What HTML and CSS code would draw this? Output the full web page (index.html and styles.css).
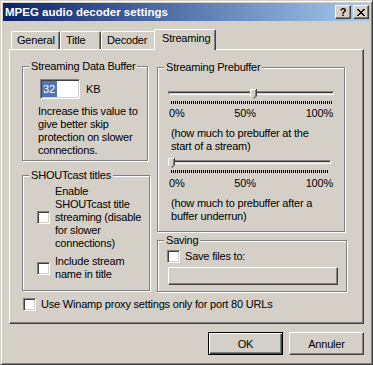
FILE: index.html
```html
<!DOCTYPE html>
<html lang="en">
<head>
    <meta charset="UTF-8">
    <title>MPEG audio decoder settings</title>
    <link rel="stylesheet" href="styles.css">
</head>
<body>
    <div class="dialog">
        <div class="titlebar">
            <span class="title-text">MPEG audio decoder settings</span>
            <div class="caption-buttons">
                <span class="caption-btn help">?</span>
                <span class="caption-btn close">
                    <svg width="8" height="7" viewBox="0 0 8 7" shape-rendering="crispEdges"><path d="M0 0h2v1H0zM6 0h2v1H6zM1 1h2v1H1zM5 1h2v1H5zM2 2h4v1H2zM3 3h2v1H3zM2 4h4v1H2zM1 5h2v1H1zM5 5h2v1H5zM0 6h2v1H0zM6 6h2v1H6z"/></svg>
                </span>
            </div>
        </div>

        <div class="client">
            <div class="tabs">
                <div class="tab tab-general">General</div>
                <div class="tab tab-title">Title</div>
                <div class="tab tab-decoder">Decoder</div>
                <div class="tab tab-streaming active">Streaming</div>
            </div>

            <div class="tab-panel">
                <div class="columns">
                    <div class="col-left">
                        <div class="group group-buffer">
                            <div class="group-title">Streaming Data Buffer</div>
                            <div class="group-body">
                                <div class="buffer-row">
                                    <div class="edit"><span class="selected">32</span></div>
                                    <span class="unit">KB</span>
                                </div>
                                <p class="hint">Increase this value to<br>give better skip<br>protection on slower<br>connections.</p>
                            </div>
                        </div>

                        <div class="group group-shoutcast">
                            <div class="group-title">SHOUTcast titles</div>
                            <div class="group-body">
                                <label class="check check-first">
                                    <span class="box"></span>
                                    <span>Enable<br>SHOUTcast title<br>streaming (disable<br>for slower<br>connections)</span>
                                </label>
                                <label class="check check-second">
                                    <span class="box"></span>
                                    <span>Include stream<br>name in title</span>
                                </label>
                            </div>
                        </div>
                    </div>

                    <div class="col-right">
                        <div class="group group-prebuffer">
                            <div class="group-title">Streaming Prebuffer</div>
                            <div class="group-body">
                                <div class="slider slider-first">
                                    <div class="track"></div>
                                    <svg class="thumb" style="left: 82px" width="7" height="10" viewBox="0 0 7 10">
                                        <path d="M0 0h7v7l-3.5 3L0 7z" fill="#d4d0c8"/>
                                        <polyline points="0.5,7.5 0.5,0.5 6,0.5" fill="none" stroke="#fff"/>
                                        <polyline points="6.5,0 6.5,7.2 3.5,9.8" fill="none" stroke="#404040"/>
                                        <polyline points="5.5,1 5.5,7 3.5,8.8" fill="none" stroke="#808080"/>
                                    </svg>
                                </div>
                                <div class="ticks"></div>
                                <div class="scale"><span>0%</span><span>50%</span><span>100%</span></div>
                                <p class="note">(how much to prebuffer at the<br>start of a stream)</p>

                                <div class="slider slider-second">
                                    <div class="track"></div>
                                    <svg class="thumb" style="left: 0" width="7" height="10" viewBox="0 0 7 10">
                                        <path d="M0 0h7v7l-3.5 3L0 7z" fill="#d4d0c8"/>
                                        <polyline points="0.5,7.5 0.5,0.5 6,0.5" fill="none" stroke="#fff"/>
                                        <polyline points="6.5,0 6.5,7.2 3.5,9.8" fill="none" stroke="#404040"/>
                                        <polyline points="5.5,1 5.5,7 3.5,8.8" fill="none" stroke="#808080"/>
                                    </svg>
                                </div>
                                <div class="ticks ticks-short"></div>
                                <div class="scale scale-second"><span>0%</span><span>50%</span><span>100%</span></div>
                                <p class="note">(how much to prebuffer after a<br>buffer underrun)</p>
                            </div>
                        </div>

                        <div class="group group-saving">
                            <div class="group-title">Saving</div>
                            <div class="group-body">
                                <label class="check check-save">
                                    <span class="box"></span>
                                    <span>Save files to:</span>
                                </label>
                                <div class="path-button"></div>
                            </div>
                        </div>
                    </div>
                </div>

                <label class="check proxy">
                    <span class="box"></span>
                    <span>Use Winamp proxy settings only for port 80 URLs</span>
                </label>
            </div>

            <div class="actions">
                <button class="btn btn-default">OK</button>
                <button class="btn">Annuler</button>
            </div>
        </div>
    </div>
</body>
</html>
```

FILE: styles.css
```css
/* Classic Windows dialog look */
body {
    margin: 0;
    background: #d4d0c8;
    font-family: "Liberation Sans", Arial, sans-serif;
    font-size: 11px;
    letter-spacing: -0.2px;
    color: #000;
}

.dialog {
    width: 373px;
    height: 365px;
    box-sizing: border-box;
    padding: 2px;
    background: #d4d0c8;
    border: 1px solid;
    border-color: #d4d0c8 #404040 #404040 #d4d0c8;
    box-shadow: inset 1px 1px #fff, inset -1px -1px #808080;
}

/* Title bar */
.titlebar {
    height: 18px;
    display: flex;
    align-items: center;
    justify-content: space-between;
    padding: 0 1px 0 2px;
    background: linear-gradient(to right, #0a246a, #a6caf0);
}
.title-text {
    color: #fff;
    font-weight: bold;
    font-size: 11.5px;
    letter-spacing: 0;
}
.caption-buttons {
    display: flex;
    gap: 2px;
}
.caption-btn {
    width: 16px;
    height: 14px;
    box-sizing: border-box;
    display: flex;
    align-items: center;
    justify-content: center;
    background: #d4d0c8;
    border: 1px solid;
    border-color: #fff #404040 #404040 #fff;
    box-shadow: inset -1px -1px #808080;
    font-weight: bold;
    font-size: 11px;
    line-height: 1;
}

/* Client area */
.client {
    padding: 8px 6px 0 6px;
}

/* Tabs */
.tabs {
    display: flex;
    align-items: flex-end;
    height: 20px;
    padding-left: 2px;
    position: relative;
    z-index: 1;
}
.tab {
    box-sizing: border-box;
    height: 18px;
    padding: 2px 0 0 5px;
    line-height: 13px;
    background: #d4d0c8;
    border: 1px solid #fff;
    border-right-color: #404040;
    border-bottom: none;
    border-radius: 2px 2px 0 0;
    box-shadow: inset -1px 0 #808080;
}
.tab-general { width: 49px; }
.tab-title { width: 41px; }
.tab-decoder { width: 55px; }
.tab-streaming { width: 58px; }
.tab.active {
    position: relative;
    z-index: 2;
    width: 62px;
    height: 21px;
    margin: 0 -2px -1px;
    padding-left: 7px;
}

.tab-panel {
    box-sizing: border-box;
    width: 355px;
    padding: 16px 0 12px 12px;
    border: 1px solid;
    border-color: #fff #404040 #404040 #fff;
    box-shadow: inset -1px -1px #808080;
}

.columns {
    display: grid;
    grid-template-columns: 135px 1fr;
    align-items: start;
}

/* Group boxes */
.group {
    box-sizing: border-box;
    border: 1px solid #808080;
    box-shadow: inset 1px 1px #fff, 1px 1px #fff;
}
.group-title {
    display: table;
    margin: -7px 0 0 6px;
    padding: 0 2px;
    line-height: 13px;
    white-space: nowrap;
    background: #d4d0c8;
}

.group-buffer {
    width: 126px;
}
.group-buffer .group-body {
    padding: 0 0 3px 15px;
}
.buffer-row {
    display: flex;
    align-items: center;
    gap: 6px;
    margin: 6px 0 0 2px;
}
.edit {
    width: 40px;
    height: 20px;
    box-sizing: border-box;
    display: flex;
    align-items: center;
    padding-left: 1px;
    background: #fff;
    border: 1px solid;
    border-color: #808080 #fff #fff #808080;
    box-shadow: inset 1px 1px #404040, inset -1px -1px #d4d0c8;
}
.selected {
    height: 16px;
    line-height: 16px;
    padding: 0 2px 0 1px;
    background: #4f74b8;
    color: #fff;
}
.hint {
    margin: 6px 0 0;
    line-height: 13px;
}

.group-shoutcast {
    width: 128px;
    margin-top: 14px;
}
.group-shoutcast .group-body {
    padding: 0 0 9px 14px;
}

/* Checkboxes */
.check {
    display: flex;
    align-items: center;
    gap: 5px;
    line-height: 13px;
    white-space: nowrap;
}
.box {
    flex: none;
    width: 13px;
    height: 13px;
    box-sizing: border-box;
    background: #fff;
    border: 1px solid;
    border-color: #808080 #fff #fff #808080;
    box-shadow: inset 1px 1px #404040, inset -1px -1px #d4d0c8;
}
.check-first { margin-top: 3px; }
.check-second { margin-top: 5px; }

/* Right column */
.group-prebuffer {
    width: 188px;
    margin-top: 1px;
}
.group-prebuffer .group-body {
    padding: 0 0 8px 10px;
}
.slider {
    position: relative;
    width: 166px;
    height: 10px;
}
.slider-first { margin-top: 15px; }
.slider-second {
    width: 163px;
    margin-top: 5px;
}
.track {
    position: absolute;
    top: 2px;
    left: 0;
    right: 0;
    height: 4px;
    box-sizing: border-box;
    border: 1px solid;
    border-color: #808080 #fff #fff #808080;
    box-shadow: inset 0 1px #404040;
}
.thumb {
    position: absolute;
    top: 0;
}
.ticks {
    width: 161px;
    height: 3px;
    margin: 2px 0 0 3px;
    background: repeating-linear-gradient(to right, #000 0 1px, transparent 1px 2px);
}
.ticks-short { width: 158px; }
.scale {
    display: flex;
    justify-content: space-between;
    width: 164px;
    margin-top: 3px;
    padding-left: 1px;
    line-height: 13px;
}
.scale-second { margin-top: 4px; }
.note {
    margin: 7px 0 0 3px;
    line-height: 13px;
}

.group-saving {
    width: 190px;
    margin-top: 8px;
}
.group-saving .group-body {
    padding: 0 0 6px 9px;
}
.check-save { margin-top: 3px; }
.path-button {
    width: 170px;
    height: 18px;
    box-sizing: border-box;
    margin: 4px 0 0 1px;
    border: 1px solid;
    border-color: #fff #404040 #404040 #fff;
    box-shadow: inset -1px -1px #808080;
}

.proxy {
    margin: 6px 0 0 1px;
}

/* Dialog buttons */
.actions {
    display: flex;
    justify-content: flex-end;
    gap: 6px;
    margin-top: 8px;
}
.btn {
    width: 75px;
    height: 23px;
    box-sizing: border-box;
    padding: 0;
    font: inherit;
    letter-spacing: inherit;
    color: #000;
    background: #d4d0c8;
    border: 1px solid;
    border-color: #fff #404040 #404040 #fff;
    box-shadow: inset -1px -1px #808080;
}
.btn-default {
    border-color: #000;
    box-shadow: inset 1px 1px #fff, inset -1px -1px #404040, inset -2px -2px #808080;
}
```
